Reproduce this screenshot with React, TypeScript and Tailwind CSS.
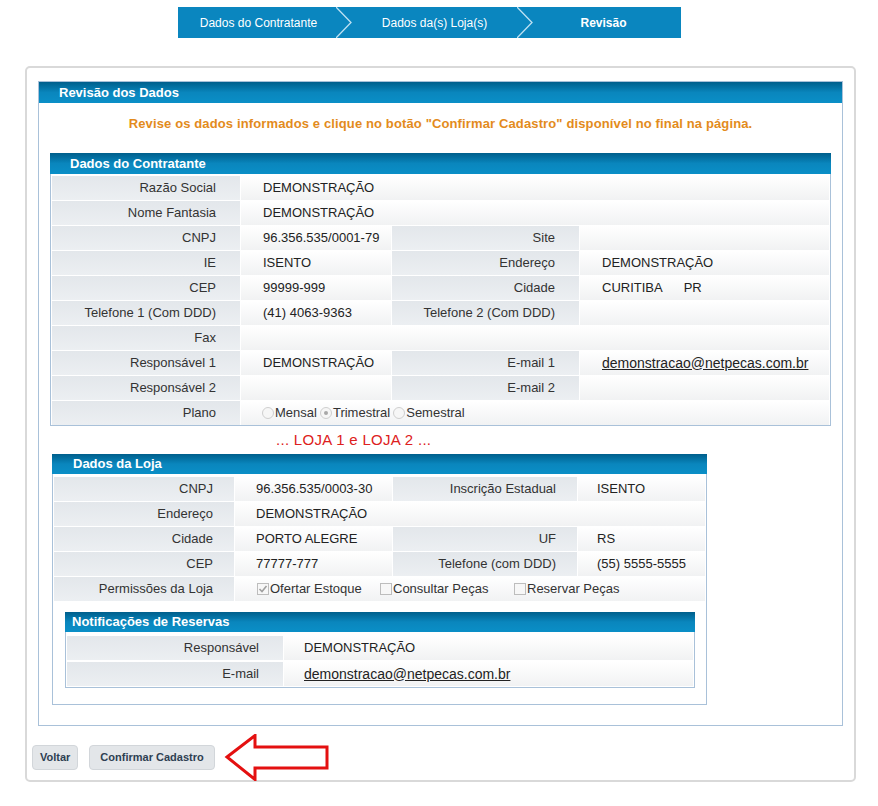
import React from 'react';

const font = { fontFamily: '"Liberation Sans", Arial, sans-serif' };

function Header({ title, pl = 'pl-[20px]', h = 'h-[21px]' }: { title: string; pl?: string; h?: string }) {
  return (
    <div className={`${h} ${pl} flex items-center bg-gradient-to-b from-[#005f8c] via-[#0a86bd] to-[#0a8fc7] text-white font-bold text-[13px]`}>
      {title}
    </div>
  );
}

function Label({ w, children, pr = 'pr-[24px]' }: { w: string; children?: React.ReactNode; pr?: string }) {
  return (
    <div className={`${w} ${pr} h-full shrink-0 flex items-center justify-end bg-gradient-to-b from-[#e3e7eb] to-[#eceff2] text-[#333]`}>
      {children}
    </div>
  );
}

function Value({ w = 'flex-1', children, pl = 'pl-[22px]' }: { w?: string; children?: React.ReactNode; pl?: string }) {
  return (
    <div className={`${w} ${pl} h-full shrink-0 flex items-center bg-gradient-to-b from-white to-[#f1f2f3] text-[#222]`}>
      {children}
    </div>
  );
}

function Email({ children }: { children: React.ReactNode }) {
  return <span className="underline text-[14px] text-[#222]">{children}</span>;
}

function Radio({ checked, label }: { checked?: boolean; label: string }) {
  return (
    <span className="flex items-center">
      <span className="w-[12px] h-[12px] rounded-full border border-[#cfcfcf] bg-[#f6f6f6] flex items-center justify-center mr-[1px]">
        {checked && <span className="w-[4px] h-[4px] rounded-full bg-[#a8a8a8]" />}
      </span>
      <span className="text-[#333]">{label}</span>
    </span>
  );
}

function Check({ checked, label, w }: { checked?: boolean; label: string; w?: string }) {
  return (
    <span className={`flex items-center ${w ?? ''}`}>
      <span className="w-[12px] h-[12px] border border-[#bdbdbd] bg-[#f7f7f7] flex items-center justify-center mr-[1px]">
        {checked && (
          <svg width="10" height="10" viewBox="0 0 10 10">
            <path d="M1.5 5 L4 7.5 L8.5 2" fill="none" stroke="#a0a0a0" strokeWidth="1.6" />
          </svg>
        )}
      </span>
      <span className="text-[#333]">{label}</span>
    </span>
  );
}

function Chevron() {
  return (
    <svg width="16" height="31" viewBox="0 0 16 31" className="shrink-0 -mx-[1px]">
      <polyline points="0,0 15,15.5 0,31" fill="none" stroke="#bfe2f3" strokeWidth="1.3" />
    </svg>
  );
}

function Row({ children }: { children: React.ReactNode }) {
  return <div className="h-[24px] flex gap-[1px]">{children}</div>;
}

export default function App() {
  return (
    <div className="min-h-screen bg-white text-[13px] pt-[7px]" style={font}>
      {/* Stepper */}
      <div className="ml-[178px] w-[503px] h-[31px] flex items-center bg-[#0a86bf] text-white text-[12px]">
        <div className="w-[159px] text-center pl-[2px]">Dados do Contratante</div>
        <Chevron />
        <div className="w-[167px] text-center">Dados da(s) Loja(s)</div>
        <Chevron />
        <div className="flex-1 text-center font-bold pr-[6px]">Revisão</div>
      </div>

      {/* Card */}
      <div className="ml-[25px] mt-[28px] w-[831px] border-2 border-[#d9d9d9] rounded-[5px] px-[11px] pt-[13px] pb-[1px]">
        <div className="w-[805px] border border-[#a9c1d9]">
          <Header title="Revisão dos Dados" h="h-[21px]" pl="pl-[20px]" />
          <div className="h-[50px] flex items-center justify-center font-bold text-[13px] tracking-[0.13px] text-[#e38b1c] pb-[8px]">
            Revise os dados informados e clique no botão "Confirmar Cadastro" disponível no final na página.
          </div>

          {/* Dados do Contratante */}
          <div className="ml-[11px] w-[781px]">
            <Header title="Dados do Contratante" h="h-[21px]" pl="pl-[20px]" />
            <div className="border-x border-b border-[#a9c1d9] pt-[2px] px-[1px] flex flex-col gap-[1px]">
              <Row>
                <Label w="w-[188px]">Razão Social</Label>
                <Value>DEMONSTRAÇÃO</Value>
              </Row>
              <Row>
                <Label w="w-[188px]">Nome Fantasia</Label>
                <Value>DEMONSTRAÇÃO</Value>
              </Row>
              <Row>
                <Label w="w-[188px]">CNPJ</Label>
                <Value w="w-[150px]">96.356.535/0001-79</Value>
                <Label w="w-[187px]">Site</Label>
                <Value w="flex-1" />
              </Row>
              <Row>
                <Label w="w-[188px]">IE</Label>
                <Value w="w-[150px]">ISENTO</Value>
                <Label w="w-[187px]">Endereço</Label>
                <Value w="flex-1">DEMONSTRAÇÃO</Value>
              </Row>
              <Row>
                <Label w="w-[188px]">CEP</Label>
                <Value w="w-[150px]">99999-999</Value>
                <Label w="w-[187px]">Cidade</Label>
                <Value w="flex-1">
                  <span>CURITIBA</span>
                  <span className="ml-[21px]">PR</span>
                </Value>
              </Row>
              <Row>
                <Label w="w-[188px]">Telefone 1 (Com DDD)</Label>
                <Value w="w-[150px]">(41) 4063-9363</Value>
                <Label w="w-[187px]">Telefone 2 (Com DDD)</Label>
                <Value w="flex-1" />
              </Row>
              <Row>
                <Label w="w-[188px]">Fax</Label>
                <Value />
              </Row>
              <Row>
                <Label w="w-[188px]">Responsável 1</Label>
                <Value w="w-[150px]">DEMONSTRAÇÃO</Value>
                <Label w="w-[187px]">E-mail 1</Label>
                <Value w="flex-1">
                  <Email>demonstracao@netpecas.com.br</Email>
                </Value>
              </Row>
              <Row>
                <Label w="w-[188px]">Responsável 2</Label>
                <Value w="w-[150px]" />
                <Label w="w-[187px]">E-mail 2</Label>
                <Value w="flex-1" />
              </Row>
              <Row>
                <Label w="w-[188px]">Plano</Label>
                <Value pl="pl-[21px]">
                  <span className="flex items-center gap-[3px]">
                    <Radio label="Mensal" />
                    <Radio checked label="Trimestral" />
                    <Radio label="Semestral" />
                  </span>
                </Value>
              </Row>
            </div>
          </div>

          <div className="h-[28px] flex items-center pl-[237px] text-[15px] tracking-[0.3px] text-[#dd2020]">
            ... LOJA 1 e LOJA 2 ...
          </div>

          {/* Dados da Loja */}
          <div className="ml-[13px] w-[655px] mb-[20px]">
            <Header title="Dados da Loja" h="h-[20px]" pl="pl-[21px]" />
            <div className="border-x border-b border-[#a9c1d9] pt-[3px] px-[1px] pb-[16px] flex flex-col gap-[1px]">
              <Row>
                <Label w="w-[180px]" pr="pr-[21px]">CNPJ</Label>
                <Value w="w-[157px]" pl="pl-[21px]">96.356.535/0003-30</Value>
                <Label w="w-[184px]" pr="pr-[21px]">Inscrição Estadual</Label>
                <Value w="flex-1" pl="pl-[19px]">ISENTO</Value>
              </Row>
              <Row>
                <Label w="w-[180px]" pr="pr-[21px]">Endereço</Label>
                <Value pl="pl-[21px]">DEMONSTRAÇÃO</Value>
              </Row>
              <Row>
                <Label w="w-[180px]" pr="pr-[21px]">Cidade</Label>
                <Value w="w-[157px]" pl="pl-[21px]">PORTO ALEGRE</Value>
                <Label w="w-[184px]" pr="pr-[21px]">UF</Label>
                <Value w="flex-1" pl="pl-[19px]">RS</Value>
              </Row>
              <Row>
                <Label w="w-[180px]" pr="pr-[21px]">CEP</Label>
                <Value w="w-[157px]" pl="pl-[21px]">77777-777</Value>
                <Label w="w-[184px]" pr="pr-[21px]">Telefone (com DDD)</Label>
                <Value w="flex-1" pl="pl-[19px]">(55) 5555-5555</Value>
              </Row>
              <Row>
                <Label w="w-[180px]" pr="pr-[21px]">Permissões da Loja</Label>
                <Value pl="pl-[22px]">
                  <Check checked label="Ofertar Estoque" w="w-[123px]" />
                  <Check label="Consultar Peças" w="w-[134px]" />
                  <Check label="Reservar Peças" />
                </Value>
              </Row>

              {/* Notificações de Reservas */}
              <div className="ml-[11px] mt-[10px] w-[630px]">
                <Header title="Notificações de Reservas" h="h-[20px]" pl="pl-[7px]" />
                <div className="border-x border-b border-[#a9c1d9] pt-[4px] pb-[1px] px-[1px] flex flex-col gap-[2px]">
                  <Row>
                    <Label w="w-[216px]" pr="pr-[24px]">Responsável</Label>
                    <Value pl="pl-[20px]">DEMONSTRAÇÃO</Value>
                  </Row>
                  <Row>
                    <Label w="w-[216px]" pr="pr-[24px]">E-mail</Label>
                    <Value pl="pl-[20px]">
                      <Email>demonstracao@netpecas.com.br</Email>
                    </Value>
                  </Row>
                </div>
              </div>
            </div>
          </div>
        </div>

        {/* Buttons */}
        <div className="flex items-center h-[25px] mt-[19px] mb-[9px] -ml-[6px]">
          <button className="h-[25px] px-[7px] rounded-[4px] bg-[#e3e6e9] border border-[#d2d6da] text-[11px] font-bold text-[#2e4052]">
            Voltar
          </button>
          <button className="ml-[11px] h-[25px] px-[10px] rounded-[4px] bg-[#e3e6e9] border border-[#d2d6da] text-[11px] font-bold text-[#2e4052]">
            Confirmar Cadastro
          </button>
          <svg width="106" height="47" viewBox="0 0 106 47" className="ml-[9px] -my-[11px]">
            <polygon
              points="3,23 31,1.5 31,13 103,13 103,34 31,34 31,45.5"
              fill="white"
              stroke="#e41010"
              strokeWidth="3"
              strokeLinejoin="miter"
            />
          </svg>
        </div>
      </div>
    </div>
  );
}
